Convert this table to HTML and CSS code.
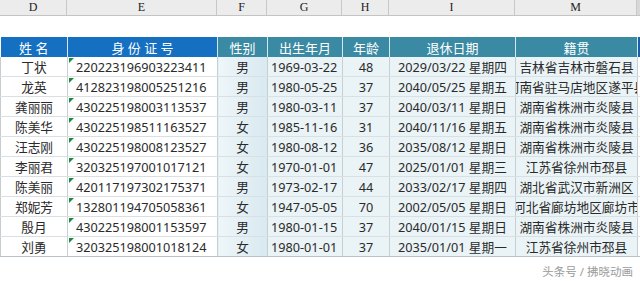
FILE: index.html
```html
<!DOCTYPE html>
<html lang="zh">
<head>
<meta charset="utf-8">
<link rel="stylesheet" href="styles.css">
</head>
<body>
<div class="sheet">
  <div class="letters">
    <div>D</div><div>E</div><div>F</div><div>G</div><div>H</div><div>I</div><div>M</div><div class="edge"></div>
  </div>
  <div class="gap"></div>
  <table class="data">
    <colgroup>
      <col class="c-d"><col class="c-e"><col class="c-f"><col class="c-g"><col class="c-h"><col class="c-i"><col class="c-m"><col class="c-n">
    </colgroup>
    <thead>
      <tr>
        <th class="blue">姓 名</th>
        <th class="blue">身 份 证 号</th>
        <th class="teal">性别</th>
        <th class="teal">出生年月</th>
        <th class="teal">年龄</th>
        <th class="teal">退休日期</th>
        <th class="teal">籍贯</th>
        <th class="edgeblue"></th>
      </tr>
    </thead>
    <tbody>
      <tr><td class="name">丁状</td><td class="id">220223196903223411</td><td class="sex">男</td><td class="birth">1969-03-22</td><td class="age">48</td><td class="ret">2029/03/22 星期四</td><td class="place"><div>吉林省吉林市磐石县</div></td><td class="n"></td></tr>
      <tr><td class="name">龙英</td><td class="id">412823198005251216</td><td class="sex">男</td><td class="birth">1980-05-25</td><td class="age">37</td><td class="ret">2040/05/25 星期五</td><td class="place"><div>河南省驻马店地区遂平县</div></td><td class="n"></td></tr>
      <tr><td class="name">龚丽丽</td><td class="id">430225198003113537</td><td class="sex">男</td><td class="birth">1980-03-11</td><td class="age">37</td><td class="ret">2040/03/11 星期日</td><td class="place"><div>湖南省株洲市炎陵县</div></td><td class="n"></td></tr>
      <tr><td class="name">陈美华</td><td class="id">430225198511163527</td><td class="sex">女</td><td class="birth">1985-11-16</td><td class="age">31</td><td class="ret">2040/11/16 星期五</td><td class="place"><div>湖南省株洲市炎陵县</div></td><td class="n"></td></tr>
      <tr><td class="name">汪志刚</td><td class="id">430225198008123527</td><td class="sex">女</td><td class="birth">1980-08-12</td><td class="age">36</td><td class="ret">2035/08/12 星期日</td><td class="place"><div>湖南省株洲市炎陵县</div></td><td class="n"></td></tr>
      <tr><td class="name">李丽君</td><td class="id">320325197001017121</td><td class="sex">女</td><td class="birth">1970-01-01</td><td class="age">47</td><td class="ret">2025/01/01 星期三</td><td class="place"><div>江苏省徐州市邳县</div></td><td class="n"></td></tr>
      <tr><td class="name">陈美丽</td><td class="id">420117197302175371</td><td class="sex">男</td><td class="birth">1973-02-17</td><td class="age">44</td><td class="ret">2033/02/17 星期四</td><td class="place"><div>湖北省武汉市新洲区</div></td><td class="n"></td></tr>
      <tr><td class="name">郑妮芳</td><td class="id">132801194705058361</td><td class="sex">女</td><td class="birth">1947-05-05</td><td class="age">70</td><td class="ret">2002/05/05 星期日</td><td class="place"><div>河北省廊坊地区廊坊市</div></td><td class="n"></td></tr>
      <tr><td class="name">殷月</td><td class="id">430225198001153597</td><td class="sex">男</td><td class="birth">1980-01-15</td><td class="age">37</td><td class="ret">2040/01/15 星期日</td><td class="place"><div>湖南省株洲市炎陵县</div></td><td class="n"></td></tr>
      <tr><td class="name">刘勇</td><td class="id">320325198001018124</td><td class="sex">女</td><td class="birth">1980-01-01</td><td class="age">37</td><td class="ret">2035/01/01 星期一</td><td class="place"><div>江苏省徐州市邳县</div></td><td class="n"></td></tr>
    </tbody>
  </table>
  <div class="footer"><span class="mark">头条号 / 拂晓动画</span></div>
</div>
</body>
</html>
```

FILE: styles.css
```css
html, body {
  margin: 0;
  padding: 0;
  background: #ffffff;
}

.sheet {
  width: 640px;
  height: 281px;
  overflow: hidden;
  font-family: "Noto Sans", "Noto Sans CJK SC", sans-serif;
}

.letters {
  display: grid;
  grid-template-columns: 67px 150px 50px 75px 47px 126px 122px 3px;
  height: 16px;
  background: #ececec;
  border-bottom: 1px solid #c4c4c4;
  box-sizing: border-box;
}

.letters div {
  font-family: "Liberation Serif", serif;
  font-size: 12px;
  line-height: 15px;
  text-align: center;
  color: #222;
  border-right: 1px solid #c8c8c8;
  box-sizing: border-box;
}

.letters .edge {
  border-right: none;
  background: #d8d8d8;
}

.gap {
  height: 21px;
}

.data {
  border-collapse: collapse;
  table-layout: fixed;
  width: 640px;
}

.c-d { width: 67px; }
.c-e { width: 150px; }
.c-f { width: 50px; }
.c-g { width: 75px; }
.c-h { width: 47px; }
.c-i { width: 126px; }
.c-m { width: 122px; }
.c-n { width: 3px; }

.data th {
  height: 20px;
  padding: 0;
  font-weight: normal;
  font-size: 13px;
  color: #ffffff;
  border-right: 1px solid #d6e6ee;
  white-space: nowrap;
}

.data th.blue {
  background: #1570c2;
}

.data th.teal {
  background: #3a8aa4;
}

.data th.edgeblue {
  background: #1b5fa8;
  border-right: none;
}

.data td {
  height: 19px;
  padding: 0;
  font-size: 12.7px;
  color: #2a2a2a;
  text-align: center;
  white-space: nowrap;
  border-right: 1px solid #c6d0d4;
  border-bottom: 1px solid #d9e0e3;
  background: #eaf3f6;
  overflow: hidden;
}

.data td.name {
  background: #ffffff;
  border-left: 1px solid #c6cdd0;
}

.data td.id {
  background: #ffffff;
  text-align: left;
  padding-left: 8px;
  position: relative;
}

.data td.id::before {
  content: "";
  position: absolute;
  left: 1px;
  top: 1px;
  border-top: 5px solid #1f8a3a;
  border-right: 5px solid transparent;
}

.data td.sex {
  background: linear-gradient(90deg, #eef6f9 0%, #d8e9f0 100%);
}

.data td.birth {
  text-align: left;
  padding-left: 3px;
}

.data td.place div {
  display: flex;
  justify-content: center;
  white-space: nowrap;
}

.data td.n {
  background: #ffffff;
  border-right: none;
}

.data tbody tr:last-child td {
  border-bottom: 1px solid #b9c2c6;
}

.footer {
  display: flex;
  justify-content: flex-end;
  padding: 6px 7px 0 0;
}

.mark {
  font-size: 11.5px;
  color: #9a9a9a;
}
```
